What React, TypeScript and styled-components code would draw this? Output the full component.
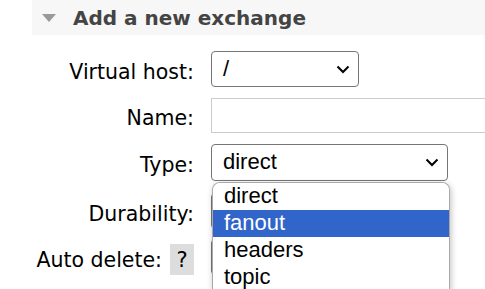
import React from 'react'
import styled, { createGlobalStyle } from 'styled-components'

const GlobalStyle = createGlobalStyle`
  html, body {
    margin: 0;
    padding: 0;
    background: #fff;
    overflow: hidden;
  }
  body {
    font-family: "DejaVu Sans", Verdana, sans-serif;
  }
`

const Page = styled.div`
  padding-left: 32px;
  height: 289px;
  overflow: hidden;
`

const SectionHeader = styled.div`
  display: flex;
  align-items: center;
  height: 35px;
  background: #f7f7f7;
  padding-left: 10px;
  gap: 17px;
`

const Triangle = styled.span`
  width: 0;
  height: 0;
  border-left: 7.5px solid transparent;
  border-right: 7.5px solid transparent;
  border-top: 8px solid #999;
`

const Title = styled.h2`
  margin: 0;
  font-size: 20px;
  font-weight: bold;
  color: #444;
`

const Form = styled.div`
  padding-top: 11px;
  display: flex;
  flex-direction: column;
`

const Row = styled.div<{ $h: number }>`
  display: grid;
  grid-template-columns: 162px auto;
  column-gap: 17px;
  align-items: center;
  height: ${p => p.$h}px;
`

const Label = styled.div`
  display: flex;
  justify-content: flex-end;
  align-items: center;
  gap: 8px;
  padding-top: 5px;
  font-size: 20.5px;
  color: #000;
  white-space: nowrap;
`

const Help = styled.span`
  display: inline-flex;
  align-items: center;
  justify-content: center;
  width: 24px;
  height: 31px;
  background: #ddd;
  font-size: 21px;
`

const Field = styled.div`
  position: relative;
`

const SelectBox = styled.div<{ $w: number; $h: number }>`
  box-sizing: border-box;
  width: ${p => p.$w}px;
  height: ${p => p.$h}px;
  border: 1px solid #767676;
  border-radius: 4px;
  display: flex;
  align-items: center;
  justify-content: space-between;
  padding: 0 8px 0 11px;
  font-family: "Liberation Sans", Arial, sans-serif;
  font-size: 22px;
  background: #fff;
`

const TextInput = styled.div`
  box-sizing: border-box;
  width: 300px;
  height: 35px;
  border: 1px solid #ccc;
`

const Dropdown = styled.ul`
  position: absolute;
  top: calc(100% + 1px);
  left: 1px;
  width: 236px;
  margin: 0;
  padding: 0;
  list-style: none;
  background: #fff;
  border: 1px solid #aaa;
  border-bottom: none;
  border-radius: 8px 8px 0 0;
  box-shadow: 1px 2px 6px rgba(0, 0, 0, 0.25);
  overflow: hidden;
  z-index: 2;
`

const Option = styled.li<{ $active?: boolean }>`
  height: 27px;
  line-height: 25px;
  padding-left: 11px;
  font-family: "Liberation Sans", Arial, sans-serif;
  font-size: 22px;
  color: ${p => (p.$active ? '#fff' : '#000')};
  background: ${p => (p.$active ? '#3165c9' : '#fff')};
`

const Chevron = () => (
  <svg width="14" height="9" viewBox="0 0 14 9">
    <path d="M1.5 1.5 L7 7 L12.5 1.5" fill="none" stroke="#000" strokeWidth="2" />
  </svg>
)

export default function App() {
  return (
    <>
      <GlobalStyle />
      <Page>
        <SectionHeader>
          <Triangle />
          <Title>Add a new exchange</Title>
        </SectionHeader>
        <Form>
          <Row $h={46}>
            <Label>Virtual host:</Label>
            <SelectBox $w={148} $h={36}>
              <span>/</span>
              <Chevron />
            </SelectBox>
          </Row>
          <Row $h={47}>
            <Label>Name:</Label>
            <TextInput />
          </Row>
          <Row $h={46}>
            <Label>Type:</Label>
            <Field>
              <SelectBox $w={237} $h={37}>
                <span>direct</span>
                <Chevron />
              </SelectBox>
              <Dropdown>
                <Option>direct</Option>
                <Option $active>fanout</Option>
                <Option>headers</Option>
                <Option>topic</Option>
              </Dropdown>
            </Field>
          </Row>
          <Row $h={52}>
            <Label>Durability:</Label>
            <SelectBox $w={150} $h={36} />
          </Row>
          <Row $h={40}>
            <Label>
              Auto delete:
              <Help>?</Help>
            </Label>
            <SelectBox $w={100} $h={36} />
          </Row>
        </Form>
      </Page>
    </>
  )
}
